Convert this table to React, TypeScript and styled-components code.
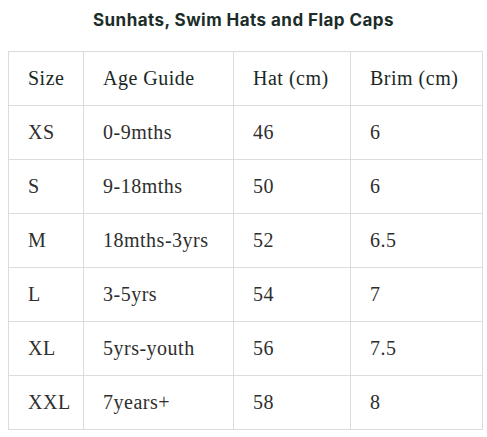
import React from 'react';
import styled, { createGlobalStyle } from 'styled-components';

const GlobalStyle = createGlobalStyle`
  body {
    margin: 0;
    background: #ffffff;
  }
`;

const Page = styled.div`
  padding: 0 8px;
`;

const Title = styled.h2`
  margin: 0;
  height: 51px;
  padding-top: 9px;
  box-sizing: border-box;
  text-align: center;
  font-family: Inter, 'Open Sans', sans-serif;
  font-weight: 700;
  font-size: 17px;
  letter-spacing: 0.45px;
  line-height: 22px;
  color: #1c2d29;
`;

const Table = styled.table`
  width: 474px;
  border-collapse: collapse;
  table-layout: fixed;
  font-family: 'Liberation Serif', serif;
  font-size: 20px;
`;

const Cell = styled.td<{ $head?: boolean }>`
  height: 54px;
  padding: 0 0 0 19px;
  border: 1px solid #dcdcdc;
  box-sizing: border-box;
  color: ${(p) => (p.$head ? '#1a2825' : '#2e2e2e')};
  letter-spacing: 0.5px;
  vertical-align: middle;
  text-align: left;
  font-weight: 400;
`;

const columns = ['Size', 'Age Guide', 'Hat (cm)', 'Brim (cm)'];
const widths = [75, 150, 117, 132];

const rows = [
  ['XS', '0-9mths', '46', '6'],
  ['S', '9-18mths', '50', '6'],
  ['M', '18mths-3yrs', '52', '6.5'],
  ['L', '3-5yrs', '54', '7'],
  ['XL', '5yrs-youth', '56', '7.5'],
  ['XXL', '7years+', '58', '8'],
];

const App = () => (
  <Page>
    <GlobalStyle />
    <Title>Sunhats, Swim Hats and Flap Caps</Title>
    <Table>
      <colgroup>
        {widths.map((w, i) => (
          <col key={i} style={{ width: w }} />
        ))}
      </colgroup>
      <thead>
        <tr>
          {columns.map((c) => (
            <Cell as='th' $head key={c}>
              {c}
            </Cell>
          ))}
        </tr>
      </thead>
      <tbody>
        {rows.map((r) => (
          <tr key={r[0]}>
            {r.map((v, i) => (
              <Cell key={i}>{v}</Cell>
            ))}
          </tr>
        ))}
      </tbody>
    </Table>
  </Page>
);

export default App;
